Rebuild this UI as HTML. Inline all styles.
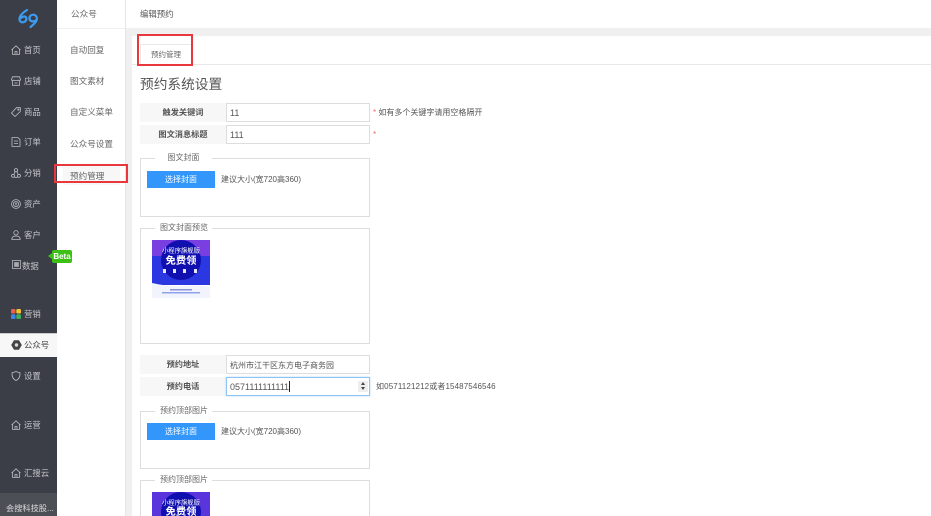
<!DOCTYPE html>
<html lang="zh">
<head>
<meta charset="utf-8">
<style>
html,body{margin:0;padding:0;width:931px;height:516px;overflow:hidden;background:#fff;font-family:"Liberation Sans","Noto Sans CJK SC",sans-serif;}
#w{position:absolute;left:0;top:0;width:931px;height:516px;overflow:hidden;filter:blur(.35px);background:#fff;}
.a{position:absolute;white-space:nowrap;}
#side{left:0;top:0;width:57px;height:516px;background:#3b3e47;}
.nav{position:absolute;left:24px;font-size:8.4px;line-height:12px;color:#c4c6ca;white-space:nowrap;}
.ic{position:absolute;left:11px;width:10px;height:10px;fill:none;stroke:#bfc1c5;stroke-width:.8;}
.sub{position:absolute;left:70px;font-size:8.6px;line-height:12px;color:#666;white-space:nowrap;}
.lab{position:absolute;left:140px;width:86px;height:19px;background:#f7f7f7;font-size:8.2px;font-weight:bold;color:#555;text-align:center;line-height:19px;}
.inp{position:absolute;left:226px;height:17px;border:1px solid #ddd;background:#fff;font-size:8px;color:#555;line-height:19px;padding-left:3px;width:139px;white-space:nowrap;}
.box{position:absolute;left:140px;width:228px;border:1px solid #ddd;background:#fff;}
.leg{position:absolute;left:155px;background:#fff;font-size:8px;color:#666;line-height:10px;padding:0 5px;width:47px;text-align:center;white-space:nowrap;}
.btn{position:absolute;left:147px;width:68px;height:17px;background:#3296fa;color:#fff;font-size:8px;line-height:17px;text-align:center;}
.tip{position:absolute;font-size:8px;color:#555;line-height:10px;white-space:nowrap;}
</style>
</head>
<body>
<div id="w">
<!-- dark sidebar -->
<div class="a" id="side"></div>
<svg class="a" style="left:17px;top:7px;width:22px;height:22px" viewBox="0 0 22 22" fill="none" stroke="#3b9cf2" stroke-width="2.2" stroke-linecap="round" stroke-linejoin="round">
<path d="M10 3 C6 5.5 2.5 8.5 2.5 12 C2.5 15.5 6 16 8 14.5 C10 13 10 9.5 7 9.5 C6 9.5 5 10 4 11"/>
<path d="M12.5 12 C12 9 14.5 7.5 16.5 7.7 C19.5 8 20.5 11 19.5 13.5 C18.5 16 16 18 13.5 20"/>
<path d="M12.5 12 C13 14.5 16.5 15 19 13.5"/>
</svg>

<svg class="ic" style="top:45px" viewBox="0 0 10 10"><path d="M.5 5 5 .8 9.5 5M1.5 4.2V9.4H8.5V4.2M4 9.4V6.5H6V9.4"/></svg>
<div class="nav" style="top:44px">首页</div>
<svg class="ic" style="top:76px" viewBox="0 0 10 10"><path d="M1.5.8H8.5L9.5 3.5C9.5 5 7 5 7 3.6 7 5 3 5 3 3.6 3 5 .5 5 .5 3.5ZM1.5 5V9.3H8.5V5M3.5 7H6.5"/></svg>
<div class="nav" style="top:75px">店铺</div>
<svg class="ic" style="top:107px" viewBox="0 0 10 10"><path d="M5.5.7H9.3V4.5L4 9.5.5 6Z"/><circle cx="7.4" cy="2.6" r=".6"/></svg>
<div class="nav" style="top:106px">商品</div>
<svg class="ic" style="top:137px" viewBox="0 0 10 10"><path d="M1 .6H7L9 2.6V9.4H1ZM3 4H7M3 6.5H7"/></svg>
<div class="nav" style="top:136px">订单</div>
<svg class="ic" style="top:168px" viewBox="0 0 10 10"><circle cx="5" cy="2.2" r="1.6"/><circle cx="2" cy="7.8" r="1.5"/><circle cx="8" cy="7.8" r="1.5"/><path d="M3.4 9.3H6.6M3 6 4 4M7 6 6 4"/></svg>
<div class="nav" style="top:167px">分销</div>
<svg class="ic" style="top:199px" viewBox="0 0 10 10"><circle cx="5" cy="5" r="4.4"/><circle cx="5" cy="5" r="2.6" stroke="#bfc1c5"/><path d="M4 3.8 5 5 6 3.8M5 5V6.6"/></svg>
<div class="nav" style="top:198px">资产</div>
<svg class="ic" style="top:230px" viewBox="0 0 10 10"><circle cx="5" cy="2.8" r="2.2"/><path d="M.8 9.4C.8 6.8 2.6 6 5 6S9.2 6.8 9.2 9.4Z"/></svg>
<div class="nav" style="top:229px">客户</div>
<svg class="ic" style="top:260px;left:12px;width:9px;height:9px" viewBox="0 0 10 10"><rect x=".5" y=".5" width="9" height="9"/><rect x="2.4" y="2.4" width="5.2" height="5.2" fill="#a9abb0" stroke="none"/></svg>
<div class="nav" style="top:260px;left:22px">数据</div>

<svg class="a" style="left:11px;top:309px;width:10px;height:10px" viewBox="0 0 10 10">
<rect x="0" y="0" width="4.5" height="4.5" rx="1.3" fill="#e8624a"/><rect x="5.3" y="0" width="4.7" height="4.5" rx="1.3" fill="#f4c430"/>
<rect x="0" y="5.3" width="4.5" height="4.7" rx="1.3" fill="#3d86e8"/><rect x="5.3" y="5.3" width="4.7" height="4.7" rx="1.3" fill="#3fae5a"/>
</svg>
<div class="nav" style="top:308px">营销</div>

<div class="a" style="left:0;top:333px;width:57px;height:24px;background:#f7f7f7;border-top:1px solid #ccc;box-sizing:border-box"></div>
<svg class="a" style="left:11px;top:340px;width:11px;height:10px" viewBox="0 0 11 10"><path d="M3 .3H8L10.8 5 8 9.7H3L.2 5Z" fill="#444"/><circle cx="5.5" cy="5" r="1.7" fill="#ddd"/></svg>
<div class="nav" style="top:339px;color:#444">公众号</div>

<svg class="ic" style="top:371px" viewBox="0 0 10 10"><path d="M1.2 1.5C3 1.5 4 1 5 .5 6 1 7 1.5 8.8 1.5 9.6 5 8 8.2 5 9.5 2 8.2.4 5 1.2 1.5Z"/></svg>
<div class="nav" style="top:370px">设置</div>
<svg class="ic" style="top:420px" viewBox="0 0 10 10"><path d="M.5 5 5 .8 9.5 5M1.5 4.2V9.4H8.5V4.2M4 9.4V6.5H6V9.4"/></svg>
<div class="nav" style="top:419px">运营</div>
<svg class="ic" style="top:468px" viewBox="0 0 10 10"><path d="M.5 5 5 .8 9.5 5M1.5 4.2V9.4H8.5V4.2M4 9.4V6.5H6V9.4"/></svg>
<div class="nav" style="top:467px">汇搜云</div>

<div class="a" style="left:0;top:493px;width:57px;height:23px;background:#4c4f56"></div>
<div class="a" style="left:6px;top:503px;font-size:8.2px;line-height:11px;color:#d8d9db;width:50px;overflow:hidden">会搜科技股...</div>

<!-- sub nav -->
<div class="a" style="left:57px;top:0;width:68px;height:516px;background:#fff"></div>
<div class="a" style="left:57px;top:28px;width:68px;height:1px;background:#f0f0f0"></div>
<div class="a" style="left:125px;top:0;width:1px;height:516px;background:#e6e6e6"></div>
<div class="a" style="left:126px;top:28px;width:6px;height:488px;background:#f0f0f0"></div>
<div class="sub" style="top:8px;left:71px">公众号</div>
<div class="sub" style="top:44px">自动回复</div>
<div class="sub" style="top:75px">图文素材</div>
<div class="sub" style="top:106px">自定义菜单</div>
<div class="sub" style="top:138px">公众号设置</div>
<div class="a" style="left:63px;top:165px;width:57px;height:20px;background:#f7f7f7"></div>
<div class="sub" style="top:170px">预约管理</div>
<div class="a" style="left:54px;top:164px;width:74px;height:19px;border:2px solid #e8383d;box-sizing:border-box"></div>

<!-- Beta tag, above the sub nav -->
<div class="a" style="left:52px;top:250px;width:20px;height:13px;background:#3cc016;border-radius:2px;color:#fff;font-size:8px;font-weight:bold;line-height:13px;text-align:center">Beta</div>
<div class="a" style="left:48px;top:253px;width:0;height:0;border:3.5px solid transparent;border-left:0;border-right:4px solid #3cc016"></div>

<!-- top bar -->
<div class="a" style="left:140px;top:8px;font-size:8.4px;line-height:12px;color:#555">编辑预约</div>
<div class="a" style="left:126px;top:28px;width:805px;height:8px;background:#f0f0f0"></div>

<!-- tabs -->
<div class="a" style="left:132px;top:64px;width:799px;height:1px;background:#e8e8e8"></div>
<div class="a" style="left:140px;top:44px;width:52px;height:21px;background:#fff;border:1px solid #e8e8e8;border-bottom:0;box-sizing:border-box;font-size:7.5px;color:#666;text-align:center;line-height:20px">预约管理</div>
<div class="a" style="left:137px;top:34px;width:56px;height:32px;border:2px solid #e8383d;box-sizing:border-box"></div>

<div class="a" style="left:140px;top:75px;font-size:13.7px;line-height:19px;color:#555">预约系统设置</div>

<!-- rows -->
<div class="lab" style="top:103px">触发关键词</div>
<div class="inp" style="top:103px;font-size:9px">11</div>
<div class="tip" style="left:373px;top:108px"><span style="color:#e66">*</span> 如有多个关键字请用空格隔开</div>
<div class="lab" style="top:125px">图文消息标题</div>
<div class="inp" style="top:125px;font-size:9px">111</div>
<div class="tip" style="left:373px;top:130px;color:#e66">*</div>

<div class="box" style="top:158px;height:57px"></div>
<div class="leg" style="top:153px">图文封面</div>
<div class="btn" style="top:171px">选择封面</div>
<div class="tip" style="left:221px;top:175px">建议大小(宽720高360)</div>

<div class="box" style="top:228px;height:114px"></div>
<div class="leg" style="top:223px">图文封面预览</div>
<svg class="a" style="left:152px;top:240px;width:58px;height:58px" viewBox="0 0 58 58">
<rect width="58" height="58" fill="#fff"/>
<rect width="58" height="45" fill="#2b38e2"/>
<rect width="58" height="16" fill="#7a3fe0"/>
<path d="M0 43 C10 45 20 47 30 46 C40 45 50 45 58 47 V58 H0Z" fill="#f1f4fc"/>
<circle cx="29" cy="20" r="20" fill="#100fb0"/>
<text x="29" y="12.5" font-size="6.3" fill="#fff" text-anchor="middle" font-family="Liberation Sans,Noto Sans CJK SC,sans-serif">小程序旗舰版</text>
<text x="29" y="24" font-size="10.3" font-weight="bold" fill="#fff" text-anchor="middle" font-family="Liberation Sans,Noto Sans CJK SC,sans-serif">免费领</text>
<g fill="#e4e6fa"><rect x="11" y="29" width="3" height="4"/><rect x="21" y="29" width="3" height="4"/><rect x="31" y="29" width="3" height="4"/><rect x="42" y="29" width="3" height="4"/></g>
<rect x="18" y="49" width="22" height="1.5" fill="#8a93d8"/>
<rect x="10" y="52" width="38" height="1.5" fill="#8fa4e8"/>
</svg>

<div class="lab" style="top:355px">预约地址</div>
<div class="inp" style="top:355px">杭州市江干区东方电子商务园</div>
<div class="lab" style="top:377px">预约电话</div>
<div class="inp" style="top:377px;font-size:9px;border-color:#8fc4f2;box-shadow:0 0 2px #b5d9f7">0571111111111<span style="display:inline-block;width:1px;height:11px;background:#222;vertical-align:-2px"></span></div>
<div class="a" style="left:358px;top:381px;width:10px;height:11px;background:#eee"></div>
<div class="a" style="left:361px;top:382px;border:2.5px solid transparent;border-top:0;border-bottom:3px solid #444"></div>
<div class="a" style="left:361px;top:387px;border:2.5px solid transparent;border-bottom:0;border-top:3px solid #444"></div>
<div class="tip" style="left:376px;top:382px;letter-spacing:.12px">如0571121212或者15487546546</div>

<div class="box" style="top:411px;height:56px"></div>
<div class="leg" style="top:406px">预约顶部图片</div>
<div class="btn" style="top:423px">选择封面</div>
<div class="tip" style="left:221px;top:427px">建议大小(宽720高360)</div>

<div class="box" style="top:480px;height:35px;border-bottom:0"></div>
<div class="leg" style="top:475px">预约顶部图片</div>
<svg class="a" style="left:152px;top:492px;width:58px;height:24px;overflow:hidden;display:block" viewBox="0 0 58 24">
<rect width="58" height="24" fill="#5a35dc"/>
<circle cx="29" cy="20" r="20" fill="#100fb0"/>
<text x="29" y="12.5" font-size="6.3" fill="#fff" text-anchor="middle" font-family="Liberation Sans,Noto Sans CJK SC,sans-serif">小程序旗舰版</text>
<text x="29" y="23" font-size="10.3" font-weight="bold" fill="#fff" text-anchor="middle" font-family="Liberation Sans,Noto Sans CJK SC,sans-serif">免费领</text>
</svg>
</div>
</body>
</html>
